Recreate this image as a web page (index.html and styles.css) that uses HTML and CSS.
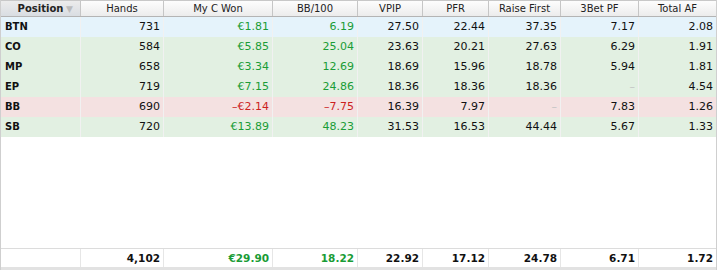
FILE: index.html
```html
<!DOCTYPE html>
<html>
<head>
<meta charset="utf-8">
<link rel="stylesheet" href="styles.css">
</head>
<body>
<div class="table">
  <div class="row head">
    <div class="hc sorted">Position<span class="arrow">▼</span></div>
    <div class="hc">Hands</div>
    <div class="hc">My C Won</div>
    <div class="hc">BB/100</div>
    <div class="hc">VPIP</div>
    <div class="hc">PFR</div>
    <div class="hc">Raise First</div>
    <div class="hc">3Bet PF</div>
    <div class="hc">Total AF</div>
  </div>
  <div class="row data blue">
    <div class="c pos">BTN</div><div class="c">731</div><div class="c pos-val">€1.81</div><div class="c pos-val">6.19</div><div class="c">27.50</div><div class="c">22.44</div><div class="c">37.35</div><div class="c">7.17</div><div class="c">2.08</div>
  </div>
  <div class="row data green">
    <div class="c pos">CO</div><div class="c">584</div><div class="c pos-val">€5.85</div><div class="c pos-val">25.04</div><div class="c">23.63</div><div class="c">20.21</div><div class="c">27.63</div><div class="c">6.29</div><div class="c">1.91</div>
  </div>
  <div class="row data green">
    <div class="c pos">MP</div><div class="c">658</div><div class="c pos-val">€3.34</div><div class="c pos-val">12.69</div><div class="c">18.69</div><div class="c">15.96</div><div class="c">18.78</div><div class="c">5.94</div><div class="c">1.81</div>
  </div>
  <div class="row data green">
    <div class="c pos">EP</div><div class="c">719</div><div class="c pos-val">€7.15</div><div class="c pos-val">24.86</div><div class="c">18.36</div><div class="c">18.36</div><div class="c">18.36</div><div class="c dash">–</div><div class="c">4.54</div>
  </div>
  <div class="row data red">
    <div class="c pos">BB</div><div class="c">690</div><div class="c neg-val">–€2.14</div><div class="c neg-val">–7.75</div><div class="c">16.39</div><div class="c">7.97</div><div class="c dash">–</div><div class="c">7.83</div><div class="c">1.26</div>
  </div>
  <div class="row data green">
    <div class="c pos">SB</div><div class="c">720</div><div class="c pos-val">€13.89</div><div class="c pos-val">48.23</div><div class="c">31.53</div><div class="c">16.53</div><div class="c">44.44</div><div class="c">5.67</div><div class="c">1.33</div>
  </div>
  <div class="filler"></div>
  <div class="row foot">
    <div class="c"></div><div class="c">4,102</div><div class="c pos-val">€29.90</div><div class="c pos-val">18.22</div><div class="c">22.92</div><div class="c">17.12</div><div class="c">24.78</div><div class="c">6.71</div><div class="c">1.72</div>
  </div>
  <div class="band"></div>
</div>
</body>
</html>
```

FILE: styles.css
```css
html, body {
  margin: 0;
  padding: 0;
  background: #ffffff;
}
.table {
  width: 717px;
  height: 270px;
  box-sizing: border-box;
  border-left: 1px solid #cfcfcf;
  border-right: 1px solid #cfcfcf;
  display: flex;
  flex-direction: column;
  font-family: "DejaVu Sans", sans-serif;
  font-size: 11px;
  color: #111;
}
.row {
  display: grid;
  grid-template-columns: 80px 83px 109px 85px 65px 66px 72px 78px 77px;
}
.head {
  height: 17px;
  box-sizing: border-box;
  border-top: 1px solid #c8c8c8;
  border-bottom: 1px solid #b4b4b4;
  background: linear-gradient(#fdfdfd, #ececec);
  font-size: 10px;
  color: #222;
}
.hc {
  position: relative;
  text-align: center;
  line-height: 15px;
  border-right: 1px solid #c6c6c6;
  white-space: nowrap;
}
.hc:last-child { border-right: none; }
.hc.sorted {
  background: linear-gradient(#ececec, #d9dde2);
  font-weight: bold;
}
.arrow {
  position: absolute;
  right: 7px;
  top: 1px;
  font-size: 9px;
  color: #bcbcbc;
  font-weight: normal;
}
.data {
  height: 20px;
}
.c {
  line-height: 20px;
  text-align: right;
  padding-right: 3px;
  border-right: 1px solid #f1f1f1;
  white-space: nowrap;
}
.c:last-child { border-right: none; }
.c.pos {
  text-align: left;
  padding-left: 4px;
  font-weight: bold;
  font-size: 10px;
}
.blue { background: #e5f3fb; }
.green { background: #e2f0e2; }
.red { background: #f4e1e1; }
.pos-val { color: #1a9c36; }
.neg-val { color: #cc1f1f; }
.dash { color: #c4c4c4; }
.filler {
  flex: 1;
}
.foot {
  height: 19px;
  box-sizing: border-box;
  border-top: 1px solid #dcdcdc;
  font-weight: bold;
  font-size: 10.5px;
}
.foot .c {
  line-height: 18px;
  border-right-color: #e6e6e6;
}
.band {
  height: 3px;
  background: #e2e2e2;
}
```
